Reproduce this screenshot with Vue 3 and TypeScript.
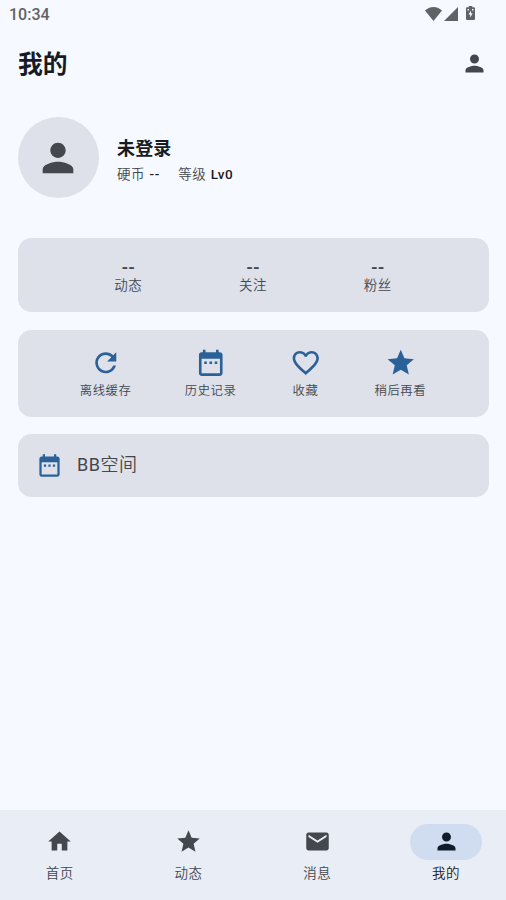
<script setup lang="ts">
interface Entry { label: string; icon: string }

const person = 'M12 12c2.21 0 4-1.79 4-4s-1.79-4-4-4-4 1.79-4 4 1.79 4 4 4zm0 2c-2.67 0-8 1.34-8 4v2h16v-2c0-2.66-5.33-4-8-4z'
const calendar = 'M9 11H7v2h2v-2zm4 0h-2v2h2v-2zm4 0h-2v2h2v-2zm2-7h-1V2h-2v2H8V2H6v2H5c-1.11 0-1.99.9-1.99 2L3 20c0 1.1.89 2 2 2h14c1.1 0 2-.9 2-2V6c0-1.1-.9-2-2-2zm0 16H5V9h14v11z'
const star = 'M12 17.27L18.18 21l-1.64-7.03L22 9.24l-7.19-.61L12 2 9.19 8.63 2 9.24l5.46 4.73L5.82 21z'
const refresh = 'M17.65 6.35C16.2 4.9 14.21 4 12 4c-4.42 0-7.99 3.58-7.99 8s3.57 8 7.99 8c3.73 0 6.84-2.55 7.73-6h-2.08c-.82 2.33-3.04 4-5.65 4-3.31 0-6-2.69-6-6s2.69-6 6-6c1.66 0 3.14.69 4.22 1.78L13 11h7V4l-2.35 2.35z'
const heart = 'M16.5 3c-1.74 0-3.41.81-4.5 2.09C10.91 3.81 9.24 3 7.5 3 4.42 3 2 5.42 2 8.5c0 3.78 3.4 6.86 8.55 11.54L12 21.35l1.45-1.32C18.6 15.36 22 12.28 22 8.5 22 5.42 19.58 3 16.5 3zm-4.4 15.55l-.1.1-.1-.1C7.14 14.24 4 11.39 4 8.5 4 6.5 5.5 5 7.5 5c1.54 0 3.04.99 3.57 2.36h1.87C13.46 5.99 14.96 5 16.5 5c2 0 3.5 1.5 3.5 3.5 0 2.89-3.14 5.74-7.9 10.05z'
const home = 'M10 20v-6h4v6h5v-8h3L12 3 2 12h3v8z'
const mail = 'M20 4H4c-1.1 0-1.99.9-1.99 2L2 18c0 1.1.9 2 2 2h16c1.1 0 2-.9 2-2V6c0-1.1-.9-2-2-2zm0 4l-8 5-8-5V6l8 5 8-5v2z'

const stats: string[] = ['动态', '关注', '粉丝']
const shortcuts: Entry[] = [
  { label: '离线缓存', icon: refresh },
  { label: '历史记录', icon: calendar },
  { label: '收藏', icon: heart },
  { label: '稍后再看', icon: star },
]
const tabs: Entry[] = [
  { label: '首页', icon: home },
  { label: '动态', icon: star },
  { label: '消息', icon: mail },
  { label: '我的', icon: person },
]
const activeTab = '我的'
</script>

<template>
  <div class="screen" lang="zh-CN">
    <div class="status">
      <span>10:34</span>
      <div class="status-icons">
        <svg class="wifi" viewBox="0 0 17 14"><path d="M8.5 14 0 3.6C2.2 1.5 5 0 8.5 0S14.8 1.5 17 3.6z" /></svg>
        <svg class="signal" viewBox="0 0 14 14"><path d="M14 0v14H0z" /></svg>
        <svg class="battery" viewBox="0 0 9 14"><path fill-rule="evenodd" d="M2.7 0h3.6v1.3H8q1 0 1 1V13q0 1-1 1H1q-1 0-1-1V2.3q0-1 1-1h1.7zM5 4.5 2.5 8.5h1.7v3L6.7 7.3H5zM1.5 3v1.5H3V3zM6 3v1.5h1.5V3z" /></svg>
      </div>
    </div>
    <header class="header">
      <h1>我的</h1>
      <svg class="icon" viewBox="0 0 24 24"><path :d="person" /></svg>
    </header>
    <main>
      <section class="profile">
        <div class="avatar"><svg viewBox="0 0 24 24"><path :d="person" /></svg></div>
        <div class="identity">
          <h2>未登录</h2>
          <div class="meta">
            <span>硬币 <b>--</b></span>
            <span>等级 <b>Lv0</b></span>
          </div>
        </div>
      </section>
      <section class="card stats">
        <div v-for="label in stats" :key="label" class="stat">
          <strong>--</strong>
          <span>{{ label }}</span>
        </div>
      </section>
      <section class="card shortcuts">
        <div v-for="item in shortcuts" :key="item.label" class="shortcut">
          <svg viewBox="0 0 24 24"><path :d="item.icon" /></svg>
          <span>{{ item.label }}</span>
        </div>
      </section>
      <section class="card space">
        <svg class="icon" viewBox="0 0 24 24"><path :d="calendar" /></svg>
        <span class="space-label"><span class="latin">BB</span>空间</span>
      </section>
    </main>
    <nav>
      <div v-for="tab in tabs" :key="tab.label" class="tab" :class="{ active: tab.label === activeTab }">
        <div class="pill"><svg class="icon" viewBox="0 0 24 24"><path :d="tab.icon" /></svg></div>
        <span>{{ tab.label }}</span>
      </div>
    </nav>
  </div>
</template>

<style>
body { margin: 0; background: #f6f9ff; }
</style>

<style scoped>
* { box-sizing: border-box; }
.screen {
  height: 900px;
  display: flex;
  flex-direction: column;
  background: #f6f9ff;
  color: #44474e;
  font-family: Roboto, "Noto Sans CJK SC", sans-serif;
  font-weight: 350;
  overflow: hidden;
}
svg { display: block; fill: currentColor; flex: none; }
.icon { width: 27px; height: 27px; }
.status {
  height: 27px;
  padding: 1px 31px 0 9px;
  display: flex;
  align-items: center;
  justify-content: space-between;
  color: #606266;
  font-size: 16px;
  font-weight: 500;
}
.status-icons { display: flex; align-items: center; }
.wifi { width: 17px; height: 14px; }
.signal { width: 14px; height: 14px; margin-left: 2px; }
.battery { width: 9px; height: 14px; margin: -2px 0 0 8px; }
.header {
  height: 72px;
  padding: 0 18px;
  display: flex;
  align-items: center;
  justify-content: space-between;
}
h1, h2 { margin: 0; color: #171b23; font-weight: 700; }
h1 { font-size: 24.75px; line-height: 32px; padding-top: 4px; }
main { flex: 1; padding: 18px 17.5px 0; }
.profile { display: flex; align-items: center; gap: 18.5px; height: 81px; margin-bottom: 40px; }
.identity { padding-top: 3px; }
.avatar {
  width: 81px;
  height: 81px;
  border-radius: 50%;
  background: #dee1e9;
  display: flex;
  align-items: center;
  justify-content: center;
}
.avatar svg { width: 46px; height: 46px; }
h2 { font-size: 18px; line-height: 27px; letter-spacing: 0.17px; }
.meta {
  display: flex;
  gap: 18.5px;
  margin-top: 3.5px;
  font-size: 13.5px;
  line-height: 18px;
  letter-spacing: 0.56px;
  word-spacing: 0.5px;
  white-space: nowrap;
}
.meta b { color: #191c20; font-weight: 500; }
.card { background: #dee1e9; border-radius: 13.5px; margin-bottom: 17.5px; }
.stats { height: 74px; display: flex; justify-content: space-evenly; align-items: center; }
.stat { display: flex; flex-direction: column; align-items: center; padding-top: 2px; }
.stat strong { font-size: 17px; line-height: 18px; font-weight: 700; letter-spacing: 0.1px; }
.stat span { font-size: 13.5px; line-height: 18px; letter-spacing: 0.56px; }
.shortcuts { height: 87px; margin-bottom: 17px; padding: 1px 9px 0; display: flex; justify-content: space-evenly; align-items: center; }
.shortcut { display: flex; flex-direction: column; align-items: center; gap: 3px; }
.shortcut svg { width: 31.5px; height: 31.5px; color: #2b6199; }
.shortcut span { font-size: 12.375px; line-height: 18px; letter-spacing: 0.56px; }
.space { height: 63.5px; padding: 0 18px; display: flex; align-items: center; gap: 14.5px; font-size: 18px; letter-spacing: 0.56px; }
.space .icon { color: #2b6199; }
.space-label { line-height: 24px; }
.latin { font-weight: 400; }
nav {
  height: 90px;
  padding-top: 13.5px;
  display: grid;
  grid-template-columns: repeat(4, 1fr);
  gap: 9px;
  background: #e9edf6;
}
.tab {
  display: flex;
  flex-direction: column;
  align-items: center;
  gap: 4px;
  font-size: 13.5px;
  line-height: 18px;
  letter-spacing: 0.56px;
}
.pill { width: 72px; height: 36px; border-radius: 18px; display: flex; align-items: center; justify-content: center; }
.active { color: #191c20; }
.active .pill { background: #d0ddf0; color: #101c2b; }
</style>
